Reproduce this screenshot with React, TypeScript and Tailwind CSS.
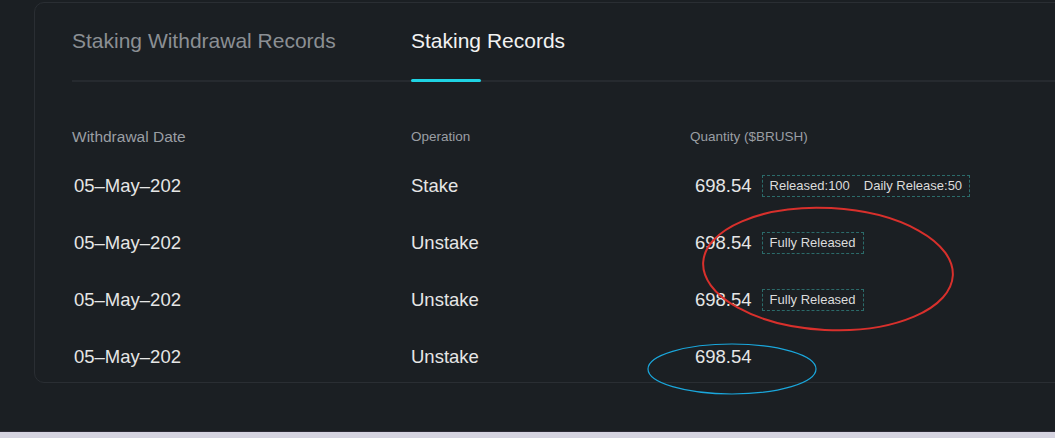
const rows = [
  { date: '05–May–202', op: 'Stake', qty: '698.54', tags: ['Released:100', 'Daily Release:50'] },
  { date: '05–May–202', op: 'Unstake', qty: '698.54', tags: ['Fully Released'] },
  { date: '05–May–202', op: 'Unstake', qty: '698.54', tags: ['Fully Released'] },
  { date: '05–May–202', op: 'Unstake', qty: '698.54', tags: [] as string[] },
];

const App = () => {
  return (
    <div className="relative w-[1055px] h-[438px] overflow-hidden bg-[#1b1f23] font-['Liberation_Sans',Arial,sans-serif]">
      <div className="h-[432px] pt-[2px] pl-[34px] border-b border-[#2c2a36]">
        <div className="w-[1040px] h-[381px] rounded-[10px] border border-[#2a2e33] pl-[37px]">
          {/* tabs */}
          <div className="flex items-end h-[79px] border-b-2 border-[#262a2f]">
            <div className="w-[339px] h-[79px] pt-[24px] text-[21px] text-[#8b8f94]">
              Staking Withdrawal Records
            </div>
            <div className="relative h-[79px] pt-[24px] text-[21px] font-medium text-[#f2f2f2]">
              Staking Records
              <div className="absolute left-0 -bottom-[2px] w-[70px] h-[3px] rounded-full bg-[#1fd3e3]" />
            </div>
          </div>

          {/* header */}
          <div className="flex items-center h-[34px] mt-[38px] text-[#9a9ea3]">
            <div className="w-[339px] text-[15.5px]">Withdrawal Date</div>
            <div className="w-[279px] text-[13.5px]">Operation</div>
            <div className="text-[13.5px]">Quantity ($BRUSH)</div>
          </div>

          {/* rows */}
          <div className="flex flex-col mt-[3px]">
            {rows.map((row, i) => (
              <div key={i} className="flex items-center h-[57px] text-[18.5px] text-[#e6e6e6]">
                <div className="w-[339px] pl-[2px]">{row.date}</div>
                <div className="w-[284px]">{row.op}</div>
                <div className="flex items-center gap-[10px]">
                  <span>{row.qty}</span>
                  {row.tags.length > 0 && (
                    <span className="flex items-center gap-[14px] h-[22px] px-[7px] border border-dashed border-[#2b6b6a] text-[13px] text-[#dcdcdc]">
                      {row.tags.map((t) => (
                        <span key={t}>{t}</span>
                      ))}
                    </span>
                  )}
                </div>
              </div>
            ))}
          </div>
        </div>
      </div>
      <div className="h-[6px] bg-[#d5d3e0]" />

      {/* hand-drawn annotations */}
      <svg className="absolute inset-0 pointer-events-none" width="1055" height="438">
        <ellipse cx="828" cy="269" rx="125" ry="61" fill="none" stroke="#d8302c" strokeWidth="2" transform="rotate(3 828 269)" />
        <ellipse cx="732" cy="369" rx="84" ry="25" fill="none" stroke="#1aa7dc" strokeWidth="1.2" />
      </svg>
    </div>
  );
};

export default App;
